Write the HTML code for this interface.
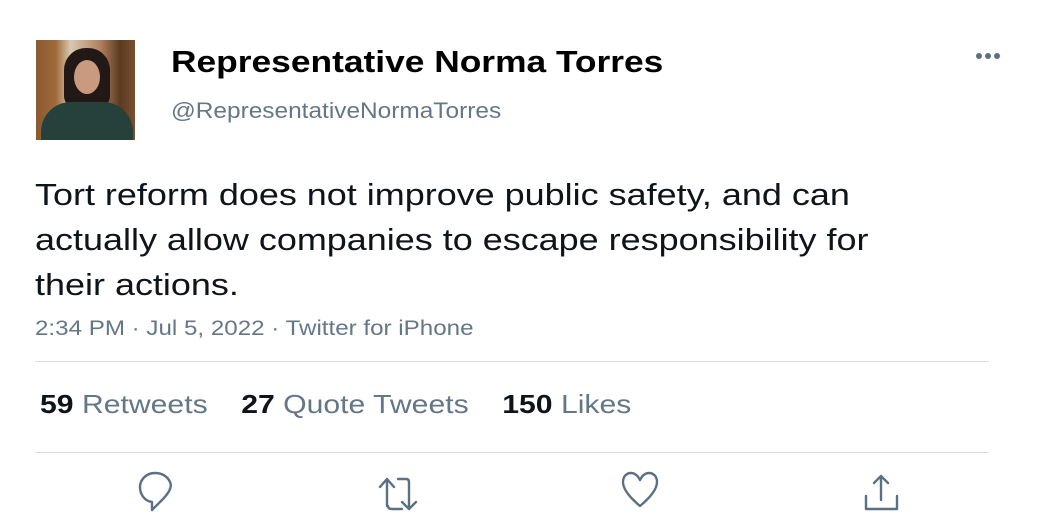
<!DOCTYPE html>
<html><head><style>
body{margin:0;width:1050px;height:525px;background:#fff;font-family:"Liberation Sans",Arial,sans-serif;position:relative;overflow:hidden}
.a{position:absolute;transform-origin:0 0}
.s{transform:scaleX(1.15)}
.g{color:#657786}
</style></head><body>
<div class="a" style="left:36px;top:40px;width:99px;height:100px;background:linear-gradient(90deg,#8a5a30 0%,#a06a3a 20%,#d8c8b0 35%,#b08060 65%,#5a3a20 85%,#7a5030 100%);overflow:hidden">
<div class="a" style="left:28px;top:8px;width:46px;height:60px;border-radius:22px 22px 12px 12px;background:#221815"></div>
<div class="a" style="left:38px;top:20px;width:26px;height:34px;border-radius:50%;background:#c99a80"></div>
<div class="a" style="left:5px;top:62px;width:92px;height:50px;border-radius:30px 30px 0 0;background:#26403c"></div>
</div>
<div class="a" style="left:171px;top:44px;font-size:31px;font-weight:bold;color:#000;transform:scaleX(1.14);white-space:nowrap">Representative Norma Torres</div>
<div class="a g" style="left:171px;top:98px;font-size:22px;transform:scaleX(1.11);white-space:nowrap">@RepresentativeNormaTorres</div>
<svg class="a" style="left:974px;top:51px" width="30" height="10"><circle cx="5" cy="5" r="3" fill="#5b7083"/><circle cx="14" cy="5" r="3" fill="#5b7083"/><circle cx="23" cy="5" r="3" fill="#5b7083"/></svg>
<div class="a" style="left:35px;top:172px;font-size:31px;line-height:45px;color:#0f1419;width:900px;transform:scaleX(1.16);white-space:nowrap">Tort reform does not improve public safety, and can<br>actually allow companies to escape responsibility for<br>their actions.</div>
<div class="a g s" style="left:35px;top:317px;font-size:21px;white-space:nowrap">2:34 PM · Jul 5, 2022 · Twitter for iPhone</div>
<div class="a" style="left:35px;top:361px;width:954px;height:1px;background:#d6dbdf"></div>
<div class="a" style="left:40px;top:389px;font-size:26px;color:#0f1419;transform:scaleX(1.16);white-space:nowrap"><b>59</b> <span class="g">Retweets</span>&nbsp;&nbsp;&nbsp; <b>27</b> <span class="g">Quote Tweets</span>&nbsp;&nbsp;&nbsp; <b>150</b> <span class="g">Likes</span></div>
<div class="a" style="left:35px;top:452px;width:954px;height:1px;background:#d6dbdf"></div>
<svg class="a" style="left:0;top:470px" width="1050" height="55" fill="none" stroke="#5b7083" stroke-width="2.4" stroke-linecap="round" stroke-linejoin="round">
<path d="M152 32 L152 40 L162 30 C170 22 172 16 170 12 C167 5 160 3 155 3 C146 3 140 10 140 17 C140 25 145 31 152 32 Z"/>
<path d="M387 36 V10 M380 17 L387 9 L394 17 M398 9 H406 Q409 9 409 12 V38 M402 32 L409 39 L416 32 M402 39 H392 Q388 39 388 36"/>
<path d="M640 36 C628 26 623 18 623 12 C623 6 627 3 631 3 C635 3 638 6 640 10 C642 6 645 3 649 3 C653 3 657 6 657 12 C657 18 652 26 640 36 Z"/>
<path d="M881 30 V6 M874 13 L881 6 L888 13 M866 26 V39 H897 V26"/>
</svg>
</body></html>
